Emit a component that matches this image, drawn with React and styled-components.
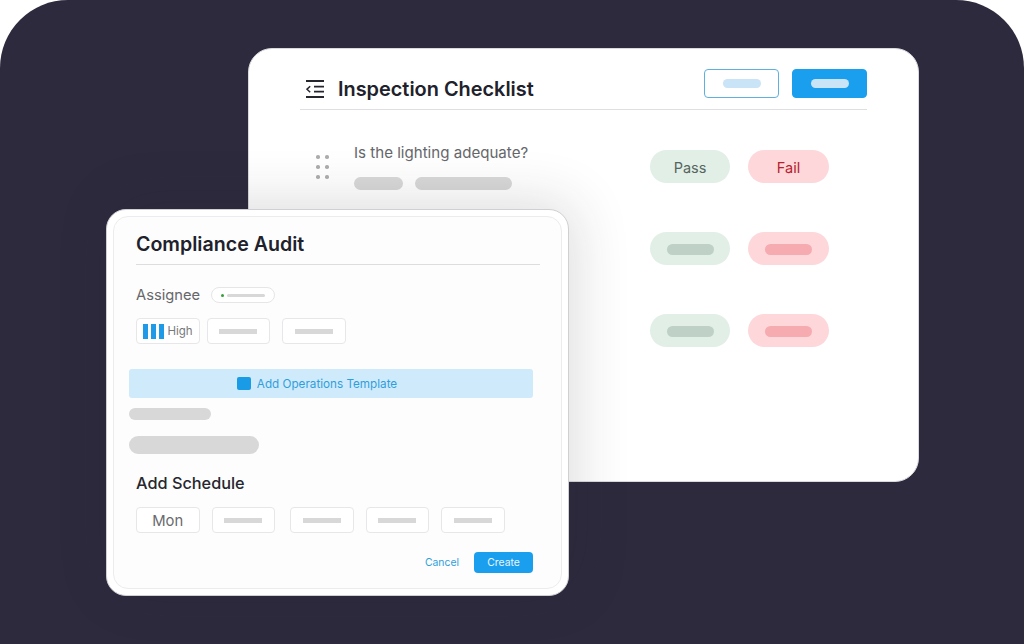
import React from 'react';
import styled, { createGlobalStyle } from 'styled-components';

const Global = createGlobalStyle`
  html, body { margin: 0; padding: 0; background: #fff; }
  body { font-family: Inter, "Noto Sans", sans-serif; }
`;

const Stage = styled.div`
  position: relative;
  width: 1024px;
  height: 644px;
  background: #2e2a3e;
  border-radius: 68px 68px 0 0;
  overflow: hidden;
`;

const MainWindow = styled.section`
  position: absolute;
  left: 248px;
  top: 48px;
  width: 671px;
  height: 434px;
  box-sizing: border-box;
  padding: 21px 51px 0;
  background: #fff;
  border: 1px solid #d9d9de;
  border-radius: 24px;
`;

const Header = styled.header`
  display: flex;
  align-items: center;
  height: 39px;
  border-bottom: 1px solid #dfdfe1;
`;

const HeaderIcon = styled.svg`
  width: 18px;
  height: 18px;
  margin: 0 14px 2px 6px;
  flex: none;
`;

const HeaderTitle = styled.h1`
  margin: 0 0 1px;
  font-size: 19.9px;
  font-weight: 600;
  color: #20212b;
  flex: 1;
  line-height: 36px;
`;

const HeaderButton = styled.div`
  width: 75px;
  height: 29px;
  box-sizing: border-box;
  margin: 0 0 13px ${p => (p.$primary ? '13px' : '0')};
  display: flex;
  align-items: center;
  justify-content: center;
  border-radius: 4px;
  background: ${p => (p.$primary ? '#1a9fef' : '#fff')};
  border: 1.5px solid ${p => (p.$primary ? '#1a9fef' : '#5fb1dd')};
`;

const ButtonBar = styled.span`
  width: 38px;
  height: 9px;
  border-radius: 5px;
  background: #c9e3f7;
`;

const Rows = styled.div`
  display: flex;
  flex-direction: column;
  margin-top: 40px;
  gap: 49px;
`;

const Row = styled.div`
  display: flex;
  align-items: flex-start;
  height: 33px;
`;

const DragDots = styled.div`
  display: grid;
  grid-template-columns: 3.5px 3.5px;
  column-gap: 5.5px;
  row-gap: 6.5px;
  margin: 5px 25.5px 0 16px;
`;

const Dot = styled.i`
  width: 3.5px;
  height: 3.5px;
  border-radius: 50%;
  background: #adadad;
`;

const Question = styled.div`
  width: 296px;
  flex: none;
`;

const QuestionText = styled.p`
  margin: -6px 0 0;
  font-size: 15.1px;
  line-height: 18px;
  color: #66676b;
`;

const SkeletonRow = styled.div`
  display: flex;
  gap: 12px;
  margin-top: 15px;
`;

const Skeleton = styled.div`
  flex: none;
  width: ${p => p.$w}px;
  height: ${p => p.$h}px;
  border-radius: ${p => p.$h / 2}px;
  background: #d8d8d8;
`;

const VerdictPill = styled.div`
  width: ${p => (p.$fail ? '81px' : '80px')};
  height: 33px;
  box-sizing: border-box;
  padding-top: 1px;
  margin-right: ${p => (p.$fail ? '0' : '18px')};
  flex: none;
  display: flex;
  align-items: center;
  justify-content: center;
  border-radius: 17px;
  font-size: 14.5px;
  background: ${p => (p.$fail ? '#fdd7da' : '#e1efe7')};
  color: ${p => (p.$fail ? '#b8202c' : '#56655e')};
`;

const PillBar = styled.span`
  width: 47px;
  height: 11px;
  border-radius: 6px;
  background: ${p => (p.$fail ? '#f5abb0' : '#bfd1c6')};
`;

const AuditWindow = styled.section`
  position: absolute;
  left: 106px;
  top: 209px;
  width: 463px;
  height: 387px;
  box-sizing: border-box;
  padding: 6px;
  background: #fff;
  border: 1px solid #cfd0d3;
  border-radius: 20px;
  box-shadow: 6px -6px 55px rgba(40, 40, 50, 0.16);
`;

const AuditInner = styled.div`
  height: 100%;
  box-sizing: border-box;
  padding: 0 21px 0 15px;
  background: #fdfdfd;
  border: 1px solid #ececee;
  border-radius: 15px;
`;

const AuditTitle = styled.h2`
  margin: 0 0 0 7px;
  height: 48px;
  box-sizing: border-box;
  font-size: 19.6px;
  line-height: 54px;
  font-weight: 600;
  color: #20212b;
  border-bottom: 1px solid #dcdde0;
  overflow: hidden;
`;

const Padded = styled.div`
  padding-left: 7px;
`;

const AssigneeRow = styled(Padded)`
  display: flex;
  align-items: center;
  gap: 11px;
  margin-top: 22px;
  height: 16px;
`;

const AssigneeLabel = styled.span`
  font-size: 14.7px;
  color: #66676b;
`;

const AssigneeChip = styled.div`
  width: 64px;
  height: 16px;
  box-sizing: border-box;
  display: flex;
  align-items: center;
  padding-left: 9px;
  gap: 3px;
  background: #fff;
  border: 1px solid #e6e6e8;
  border-radius: 8px;
`;

const ChipDot = styled.i`
  width: 3px;
  height: 3px;
  border-radius: 50%;
  background: #35a03a;
`;

const ChipLine = styled.span`
  width: 38px;
  height: 3px;
  border-radius: 2px;
  background: #d8d8d8;
`;

const OptionRow = styled(Padded)`
  display: flex;
  margin-top: ${p => p.$top}px;
`;

const OptionBox = styled.div`
  width: 63.5px;
  height: 26px;
  box-sizing: border-box;
  margin-left: ${p => p.$gap || 0}px;
  padding-top: ${p => (p.$big ? '2px' : '0')};
  flex: none;
  display: flex;
  align-items: center;
  justify-content: center;
  background: #fff;
  border: 1px solid #e7e7e9;
  border-radius: 4px;
  font-size: ${p => (p.$big ? '14.8px' : '11.5px')};
  color: ${p => (p.$big ? '#696a6e' : '#77787c')};
`;

const OptionLine = styled.span`
  width: 38px;
  height: 5px;
  background: #d8d8d8;
`;

const PriorityBars = styled.span`
  display: flex;
  gap: 2.5px;
  margin-right: 3px;
`;

const PriorityBar = styled.i`
  width: 5.5px;
  height: 15px;
  background: #1f9ae6;
`;

const Banner = styled.div`
  display: flex;
  align-items: center;
  justify-content: center;
  box-sizing: border-box;
  height: 29px;
  margin-top: 25px;
  width: 404px;
  padding-right: 28px;
  background: #cfeafb;
  border-radius: 3px;
  font-size: 11.7px;
  color: #2f9fdc;
  gap: 6px;
`;

const BannerIcon = styled.i`
  width: 14px;
  height: 13px;
  border-radius: 2px;
  background: #1a9be6;
`;

const AuditSkeleton = styled(Skeleton)`
  margin-top: ${p => p.$top}px;
`;

const SectionTitle = styled.h3`
  margin: 19px 0 0;
  padding-left: 7px;
  font-size: 16.3px;
  line-height: 20px;
  font-weight: 500;
  color: #26272f;
`;

const Footer = styled.div`
  display: flex;
  align-items: center;
  justify-content: flex-end;
  width: 404px;
  margin-top: 19px;
  gap: 15px;
`;

const CancelLink = styled.span`
  font-size: 10.4px;
  color: #2f9fdc;
`;

const CreateButton = styled.div`
  width: 59px;
  height: 21px;
  display: flex;
  align-items: center;
  justify-content: center;
  border-radius: 4px;
  background: #1a9fef;
  color: #e8f5fd;
  font-size: 10.4px;
`;

const Placeholder = styled.div`
  width: 350px;
  flex: none;
`;

const BlankRow = () => (
  <Row>
    <Placeholder />
    <VerdictPill><PillBar /></VerdictPill>
    <VerdictPill $fail><PillBar $fail /></VerdictPill>
  </Row>
);

export default function App() {
  return (
    <>
      <Global />
      <Stage>
        <MainWindow>
          <Header>
            <HeaderIcon viewBox="0 0 18 18" fill="none" stroke="#25262e">
              <path d="M0 1h18M0 17h18" strokeWidth="2" />
              <path d="M8 6.7h10M8 11.7h10" strokeWidth="1.7" />
              <path d="M4.2 6.2L1 9.2l3.2 3" strokeWidth="1.5" />
            </HeaderIcon>
            <HeaderTitle>Inspection Checklist</HeaderTitle>
            <HeaderButton><ButtonBar /></HeaderButton>
            <HeaderButton $primary><ButtonBar /></HeaderButton>
          </Header>
          <Rows>
            <Row>
              <DragDots>
                {[0, 1, 2, 3, 4, 5].map(i => <Dot key={i} />)}
              </DragDots>
              <Question>
                <QuestionText>Is the lighting adequate?</QuestionText>
                <SkeletonRow>
                  <Skeleton $w={49} $h={13} />
                  <Skeleton $w={97} $h={13} />
                </SkeletonRow>
              </Question>
              <VerdictPill>Pass</VerdictPill>
              <VerdictPill $fail>Fail</VerdictPill>
            </Row>
            <BlankRow />
            <BlankRow />
          </Rows>
        </MainWindow>
        <AuditWindow>
          <AuditInner>
            <AuditTitle>Compliance Audit</AuditTitle>
            <AssigneeRow>
              <AssigneeLabel>Assignee</AssigneeLabel>
              <AssigneeChip><ChipDot /><ChipLine /></AssigneeChip>
            </AssigneeRow>
            <OptionRow $top={15}>
              <OptionBox>
                <PriorityBars><PriorityBar /><PriorityBar /><PriorityBar /></PriorityBars>
                High
              </OptionBox>
              <OptionBox $gap={7}><OptionLine /></OptionBox>
              <OptionBox $gap={12}><OptionLine /></OptionBox>
            </OptionRow>
            <Banner><BannerIcon />Add Operations Template</Banner>
            <AuditSkeleton $top={10} $w={82} $h={12} />
            <AuditSkeleton $top={16} $w={130} $h={18} />
            <SectionTitle>Add Schedule</SectionTitle>
            <OptionRow $top={14}>
              <OptionBox $big>Mon</OptionBox>
              <OptionBox $gap={12}><OptionLine /></OptionBox>
              <OptionBox $gap={15}><OptionLine /></OptionBox>
              <OptionBox $gap={12}><OptionLine /></OptionBox>
              <OptionBox $gap={12}><OptionLine /></OptionBox>
            </OptionRow>
            <Footer>
              <CancelLink>Cancel</CancelLink>
              <CreateButton>Create</CreateButton>
            </Footer>
          </AuditInner>
        </AuditWindow>
      </Stage>
    </>
  );
}
